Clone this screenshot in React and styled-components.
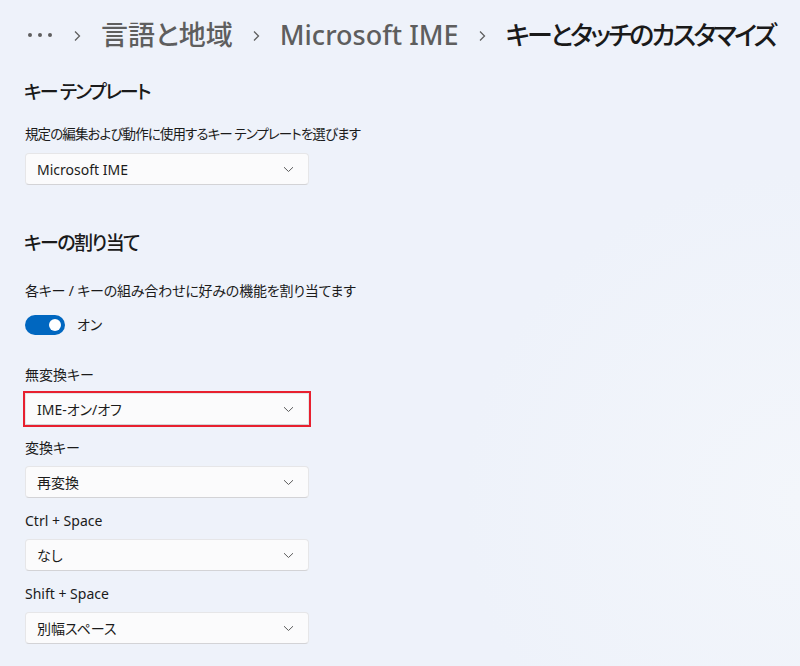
import React from "react";
import styled, { createGlobalStyle, css } from "styled-components";

const GlobalStyle = createGlobalStyle`
  html, body {
    margin: 0;
    padding: 0;
  }
  body {
    background: radial-gradient(ellipse 60% 70% at 100% 75%, #f3f6fb 0%, #eef2fa 70%);
    background-color: #eef2fa;
    min-height: 666px;
    font-family: "Noto Sans", "Noto Sans CJK JP", sans-serif;
    font-feature-settings: "palt";
    color: #1b1b1b;
  }
`;

const fields = [
  { label: "無変換キー", value: "IME-オン/オフ", focused: true },
  { label: "変換キー", value: "再変換" },
  { label: "Ctrl + Space", value: "なし" },
  { label: "Shift + Space", value: "別幅スペース" },
];

function Chevron() {
  return (
    <svg width="11" height="7" viewBox="0 0 11 7">
      <path d="M1 1.2l4.5 4.3L10 1.2" fill="none" stroke="#5c5c5c" strokeWidth="1" />
    </svg>
  );
}

function CrumbArrow() {
  return (
    <ArrowIcon width="7" height="12" viewBox="0 0 7 12">
      <path d="M1 1.5L5.5 6 1 10.5" fill="none" stroke="#5f5f5f" strokeWidth="1.3" />
    </ArrowIcon>
  );
}

function Dropdown({ value, focused }) {
  return (
    <Select $focused={focused}>
      <span>{value}</span>
      <Chevron />
    </Select>
  );
}

function App() {
  return (
    <>
      <GlobalStyle />
      <Page>
        <Breadcrumb>
          <Dots>
            <i />
            <i />
            <i />
          </Dots>
          <CrumbArrow />
          <Crumb>言語と地域</Crumb>
          <CrumbArrow />
          <Crumb>Microsoft IME</Crumb>
          <CrumbArrow />
          <Crumb $current>キーとタッチのカスタマイズ</Crumb>
        </Breadcrumb>

        <SectionTitle $top={25} $ls={-1.9}>キー テンプレート</SectionTitle>
        <Desc $top={18} $size={13.5} $ls={-0.9}>
          規定の編集および動作に使用するキー テンプレートを選びます
        </Desc>
        <DropWrap $top={9}>
          <Dropdown value="Microsoft IME" />
        </DropWrap>

        <SectionTitle $top={44} $ls={-1.6}>キーの割り当て</SectionTitle>
        <Desc $top={24} $size={14} $ls={-0.2}>
          各キー / キーの組み合わせに好みの機能を割り当てます
        </Desc>
        <ToggleRow>
          <Toggle>
            <Thumb />
          </Toggle>
          <span>オン</span>
        </ToggleRow>

        {fields.map((f, i) => (
          <Field key={f.label} $top={i === 0 ? 30 : 13}>
            <Label>{f.label}</Label>
            <DropWrap $top={8}>
              <Dropdown value={f.value} focused={f.focused} />
            </DropWrap>
          </Field>
        ))}
      </Page>
    </>
  );
}

const Page = styled.div`
  padding: 17px 24px 0 24px;
  display: flex;
  flex-direction: column;
`;

const Breadcrumb = styled.div`
  display: flex;
  align-items: center;
  gap: 20px;
  height: 36px;
  white-space: nowrap;
`;

const ArrowIcon = styled.svg`
  flex-shrink: 0;
  margin-top: 2px;
`;

const Dots = styled.div`
  display: flex;
  gap: 6px;
  padding-left: 4px;
  margin-right: 2px;
  flex-shrink: 0;

  i {
    width: 4px;
    height: 4px;
    border-radius: 50%;
    background: #5f5f5f;
  }
`;

const Crumb = styled.span`
  flex-shrink: 0;
  font-size: ${(p) => (p.$current ? "26px" : "27px")};
  line-height: 36px;
  font-weight: 500;
  color: ${(p) => (p.$current ? "#1a1a1a" : "#5e5e5e")};
  letter-spacing: ${(p) => (p.$current ? "-2.7px" : "0")};
`;

const SectionTitle = styled.h2`
  margin: ${(p) => p.$top}px 0 0;
  font-size: 19px;
  line-height: 28px;
  font-weight: 500;
  letter-spacing: ${(p) => p.$ls}px;
  color: #1a1a1a;
`;

const Label = styled.div`
  font-size: 14px;
  line-height: 20px;
  color: #1b1b1b;
  padding-left: 1px;
`;

const Desc = styled(Label)`
  margin-top: ${(p) => p.$top}px;
  font-size: ${(p) => p.$size}px;
  letter-spacing: ${(p) => p.$ls}px;
`;

const Field = styled.div`
  margin-top: ${(p) => p.$top}px;
  display: flex;
  flex-direction: column;
`;

const DropWrap = styled.div`
  margin-top: ${(p) => p.$top}px;
  padding-left: 1px;
`;

const Select = styled.div`
  box-sizing: border-box;
  width: 284px;
  height: 32px;
  display: flex;
  align-items: center;
  justify-content: space-between;
  padding: 0 14px 0 11px;
  background: #fbfbfc;
  border: 1px solid #e6e6e8;
  border-bottom-color: #d3d3d6;
  border-radius: 4px;
  font-size: 14px;
  color: #1b1b1b;

  ${(p) =>
    p.$focused &&
    css`
      outline: 2px solid #e8202f;
      outline-offset: 0px;
      border-radius: 0;
    `}
`;

const ToggleRow = styled.div`
  margin-top: 14px;
  display: flex;
  align-items: center;
  gap: 12px;
  padding-left: 1px;
  font-size: 14px;
  line-height: 20px;
`;

const Toggle = styled.div`
  position: relative;
  width: 40px;
  height: 20px;
  border-radius: 10px;
  background: #0067c0;
`;

const Thumb = styled.div`
  position: absolute;
  top: 4px;
  right: 4px;
  width: 12px;
  height: 12px;
  border-radius: 50%;
  background: #ffffff;
`;

export default App;
